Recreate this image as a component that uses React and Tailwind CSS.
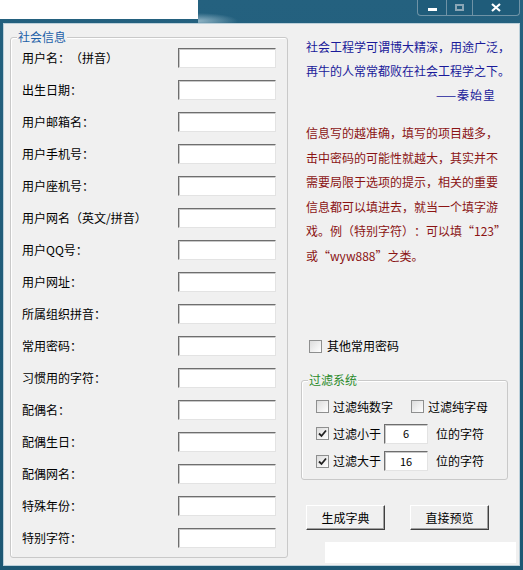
import React from "react";

const fields = [
  "用户名：（拼音）",
  "出生日期：",
  "用户邮箱名：",
  "用户手机号：",
  "用户座机号：",
  "用户网名（英文/拼音）",
  "用户QQ号：",
  "用户网址：",
  "所属组织拼音：",
  "常用密码：",
  "习惯用的字符：",
  "配偶名：",
  "配偶生日：",
  "配偶网名：",
  "特殊年份：",
  "特别字符：",
];

function Check({ checked }) {
  return (
    <span className="w-[13px] h-[13px] shrink-0 border border-[#8e8f8f] bg-gradient-to-br from-[#dcdcdc] to-white flex items-center justify-center">
      {checked && (
        <svg width="9" height="9" viewBox="0 0 9 9">
          <path d="M1 4.5 L3.5 7 L8 1.5" fill="none" stroke="#222" strokeWidth="1.8" />
        </svg>
      )}
    </span>
  );
}

function Sunken({ className = "", children }) {
  return (
    <div
      className={`h-[20px] bg-white border border-t-[#6e6e6e] border-l-[#6e6e6e] border-r-[#e3e3e3] border-b-[#e3e3e3] shadow-[inset_1px_1px_0_#c8c8c8] flex items-center justify-center text-[11px] ${className}`}
    >
      {children}
    </div>
  );
}

function Button({ children }) {
  return (
    <button className="w-[79px] h-[25px] bg-[#f0f0f0] border border-t-white border-l-white border-r-[#404040] border-b-[#404040] shadow-[inset_-1px_-1px_0_#a0a0a0] text-[12px] text-black">
      {children}
    </button>
  );
}

export default function App() {
  return (
    <div className="w-[523px] h-[570px] bg-gradient-to-b from-[#24617f] to-[#1d5773] flex flex-col font-['SimSun','Noto_Sans_CJK_SC',sans-serif] text-[12px] leading-none overflow-hidden [text-spacing-trim:space-all]">
      {/* title bar */}
      <div className="h-[23px] flex shrink-0">
        <div className="w-[198px] h-[19px] bg-white" />
        <div className="flex-1 bg-[radial-gradient(ellipse_40px_8px_at_0px_21px,#8fb3c4,transparent)]" />
        <div className="flex h-[16px] mr-[3px] border border-t-0 border-[#6f93a6] rounded-b-[4px] overflow-hidden bg-[#1f5c7a]">
          <div className="w-[29px] flex items-center justify-center border-r border-[#6f93a6]">
            <span className="w-[9px] h-[3px] bg-white mt-[4px]" />
          </div>
          <div className="w-[26px] flex items-center justify-center border-r border-[#6f93a6]">
            <span className="w-[9px] h-[7px] border-2 border-[#8aa6b6]" />
          </div>
          <div className="w-[46px] flex items-center justify-center">
            <svg width="10" height="9" viewBox="0 0 10 9">
              <path d="M1 1 L9 8 M9 1 L1 8" stroke="white" strokeWidth="2.2" />
            </svg>
          </div>
        </div>
      </div>

      {/* client area */}
      <div className="mx-[3px] mb-[4px] flex-1 bg-[#f0f0f0] border border-[#bcd0da] flex">
        {/* left group */}
        <div className="relative ml-[6px] mt-[13px] w-[278px] h-[521px] border border-[#c9c9c9] rounded-[3px] shadow-[inset_1px_1px_0_white] pt-[4px]">
          <span className="absolute left-[6px] -top-[7px] px-[1px] bg-[#f0f0f0] text-[#1d5fa8]">社会信息</span>
          {fields.map((f) => (
            <div key={f} className="h-[32px] flex items-center">
              <span className="ml-[11px] flex-1 text-black">{f}</span>
              <Sunken className="w-[98px] mr-[11px]" />
            </div>
          ))}
        </div>

        {/* right column */}
        <div className="ml-[13px] w-[217px] flex flex-col">
          <div className="mt-[11px] ml-[5px] text-[#1a1a9a] leading-[24px]">
            <div>社会工程学可谓博大精深，用途广泛，</div>
            <div>再牛的人常常都败在社会工程学之下。</div>
            <div className="text-right pr-[22px] tracking-[1px]">——秦始皇</div>
          </div>
          <div className="mt-[14px] ml-[5px] text-[#8b1414] leading-[24.5px]">
            <div>信息写的越准确，填写的项目越多，</div>
            <div>击中密码的可能性就越大，其实并不</div>
            <div>需要局限于选项的提示，相关的重要</div>
            <div>信息都可以填进去，就当一个填字游</div>
            <div>戏。例（特别字符）：可以填“123”</div>
            <div>或“wyw888”之类。</div>
          </div>

          <div className="mt-[70px] ml-[8px] h-[16px] flex items-center gap-[5px] text-black">
            <Check />
            <span>其他常用密码</span>
          </div>

          <div className="relative mt-[26px] w-[207px] h-[100px] border border-[#c9c9c9] rounded-[3px] shadow-[inset_1px_1px_0_white] pt-[12px] pl-[14px]">
            <span className="absolute left-[6px] -top-[7px] px-[1px] bg-[#f0f0f0] text-[#2a8a2a]">过滤系统</span>
            <div className="h-[27px] flex items-center text-black">
              <Check />
              <span className="ml-[4px] w-[78px]">过滤纯数字</span>
              <Check />
              <span className="ml-[4px]">过滤纯字母</span>
            </div>
            <div className="h-[27px] flex items-center text-black">
              <Check checked />
              <span className="ml-[4px]">过滤小于</span>
              <Sunken className="w-[44px] ml-[3px]">6</Sunken>
              <span className="ml-[8px]">位的字符</span>
            </div>
            <div className="h-[28px] flex items-center text-black">
              <Check checked />
              <span className="ml-[4px]">过滤大于</span>
              <Sunken className="w-[44px] ml-[3px]">16</Sunken>
              <span className="ml-[8px]">位的字符</span>
            </div>
          </div>

          <div className="mt-[25px] ml-[5px] flex gap-[25px]">
            <Button>生成字典</Button>
            <Button>直接预览</Button>
          </div>

          <div className="mt-[12px] ml-[24px] w-[191px] h-[21px] bg-white" />
        </div>
      </div>
    </div>
  );
}
